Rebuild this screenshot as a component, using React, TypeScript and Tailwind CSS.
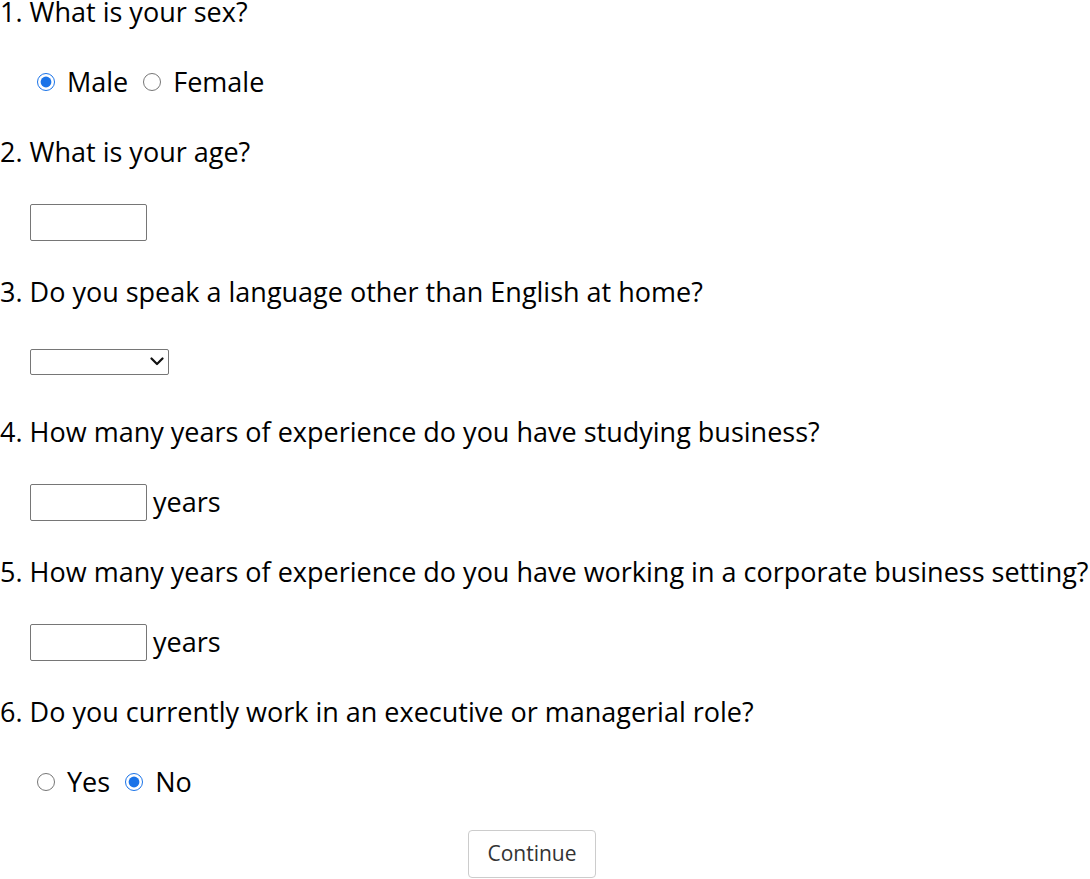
import { useState } from "react";

function Radio({ name, label, checked, onChange }: { name: string; label: string; checked: boolean; onChange: () => void }) {
  return (
    <label className="flex items-center">
      <input
        type="radio"
        name={name}
        checked={checked}
        onChange={onChange}
        className="w-[18px] h-[18px] m-0 ml-[1px] mr-[12px] accent-[#1a73e8]"
      />
      <span className="mr-[14px]">{label}</span>
    </label>
  );
}

function TextBox() {
  return <input type="text" className="w-[117px] h-[37px] border border-[#767676] rounded-[2px] bg-white px-1" />;
}

export default function App() {
  const [sex, setSex] = useState("male");
  const [manager, setManager] = useState("no");

  return (
    <div className="font-['Open_Sans',sans-serif] text-[27px] text-black bg-white w-[1090px] h-[879px] overflow-hidden">
      <div className="leading-6">1. What is your sex?</div>
      <div className="h-9 mt-10 mb-10 pl-[36px] flex items-center">
        <Radio name="sex" label="Male" checked={sex === "male"} onChange={() => setSex("male")} />
        <Radio name="sex" label="Female" checked={sex === "female"} onChange={() => setSex("female")} />
      </div>

      <div className="leading-6">2. What is your age?</div>
      <div className="h-9 mt-10 mb-10 pl-[30px] flex items-center">
        <TextBox />
      </div>

      <div className="leading-6">3. Do you speak a language other than English at home?</div>
      <div className="h-9 mt-10 mb-10 pl-[30px] flex items-center">
        <div className="relative w-[139px] h-[26px] leading-none">
          <select className="block appearance-none w-full h-full border border-[#767676] rounded-[2px] bg-white text-[16px] leading-none py-0 px-1">
            <option></option>
            <option>Yes</option>
            <option>No</option>
          </select>
          <svg
            className="absolute right-[5px] top-[8px] pointer-events-none"
            width="14"
            height="9"
            viewBox="0 0 14 9"
            fill="none"
          >
            <path d="M1.5 1.5 L7 7 L12.5 1.5" stroke="#111" strokeWidth="2.2" strokeLinecap="round" strokeLinejoin="round" />
          </svg>
        </div>
      </div>

      <div className="leading-6">4. How many years of experience do you have studying business?</div>
      <div className="h-9 mt-10 mb-10 pl-[30px] flex items-center gap-[6px]">
        <TextBox />
        <span>years</span>
      </div>

      <div className="leading-6 whitespace-nowrap">5. How many years of experience do you have working in a corporate business setting?</div>
      <div className="h-9 mt-10 mb-10 pl-[30px] flex items-center gap-[6px]">
        <TextBox />
        <span>years</span>
      </div>

      <div className="leading-6">6. Do you currently work in an executive or managerial role?</div>
      <div className="h-9 mt-10 pl-[36px] flex items-center">
        <Radio name="mgr" label="Yes" checked={manager === "yes"} onChange={() => setManager("yes")} />
        <Radio name="mgr" label="No" checked={manager === "no"} onChange={() => setManager("no")} />
      </div>

      <div className="mt-[30px] pl-[468px]">
        <button className="w-[128px] h-[48px] border border-[#cccccc] rounded-[4px] bg-white text-[21px] text-[#333333]">
          Continue
        </button>
      </div>
    </div>
  );
}
